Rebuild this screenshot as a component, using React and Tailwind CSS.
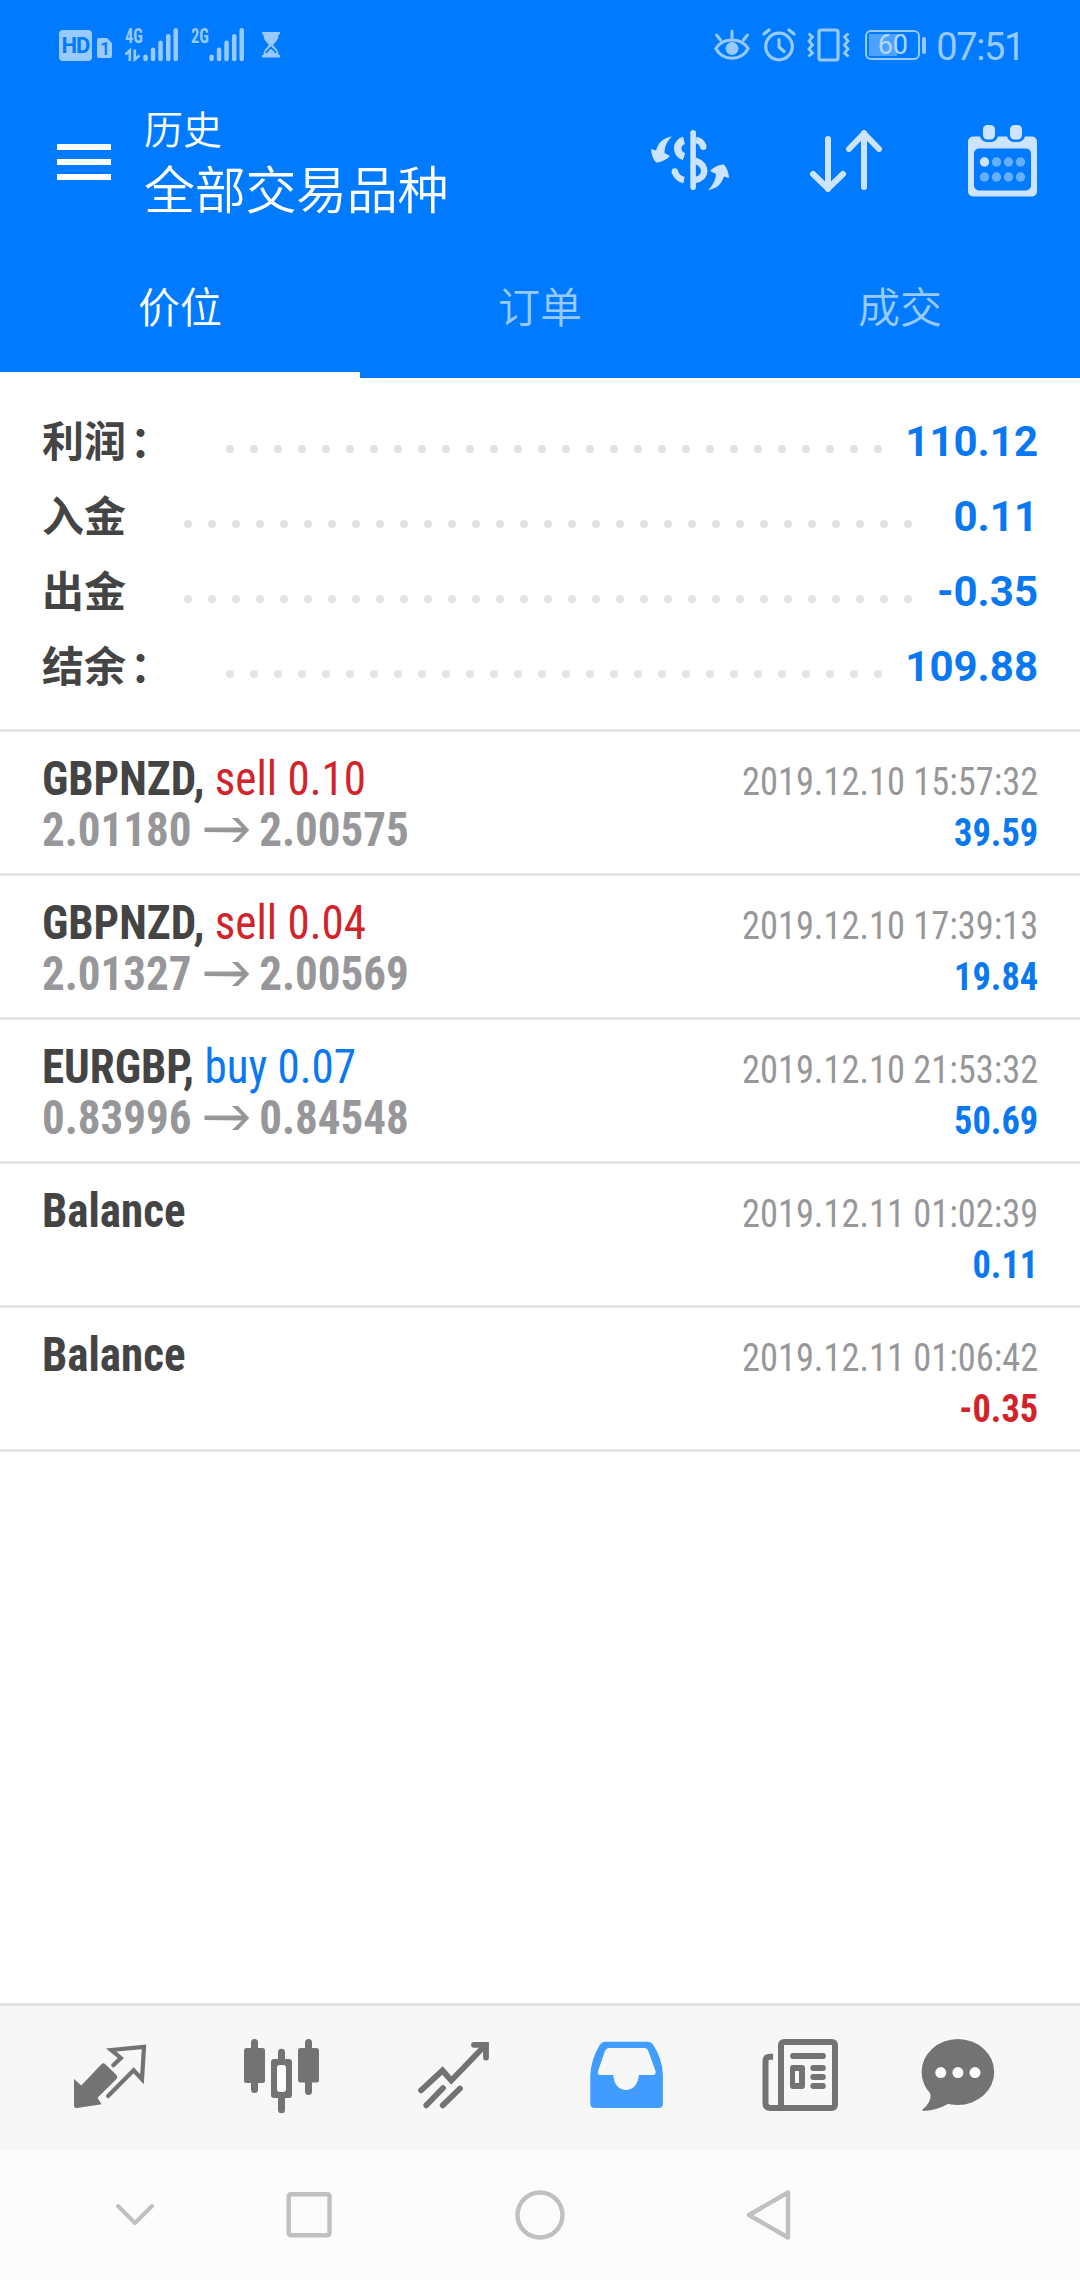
import React, { useState } from 'react';

// -----------------------------------------------------------------------------
// DATA
// -----------------------------------------------------------------------------
const TABS = ['价位', '订单', '成交'];

const SUMMARY = [
    { label: '利润', colon: true, value: '110.12', dots: 28, dotsClass: 'right-[156px]' },
    { label: '入金', value: '0.11', dots: 31, dotsClass: 'right-[126px]' },
    { label: '出金', value: '-0.35', dots: 31, dotsClass: 'right-[126px]' },
    { label: '结余', colon: true, value: '109.88', dots: 28, dotsClass: 'right-[156px]' },
];

const DEALS = [
    { id: 1, symbol: 'GBPNZD', side: 'sell', volume: '0.10', open: '2.01180', close: '2.00575', time: '2019.12.10 15:57:32', profit: '39.59' },
    { id: 2, symbol: 'GBPNZD', side: 'sell', volume: '0.04', open: '2.01327', close: '2.00569', time: '2019.12.10 17:39:13', profit: '19.84' },
    { id: 3, symbol: 'EURGBP', side: 'buy', volume: '0.07', open: '0.83996', close: '0.84548', time: '2019.12.10 21:53:32', profit: '50.69' },
    { id: 4, symbol: 'Balance', time: '2019.12.11 01:02:39', profit: '0.11' },
    { id: 5, symbol: 'Balance', time: '2019.12.11 01:06:42', profit: '-0.35' },
];

// -----------------------------------------------------------------------------
// STATUS BAR
// -----------------------------------------------------------------------------
const Signal = ({ label, data }) => (
    <svg className="overflow-visible" width="54" height="35" viewBox="0 0 54 35" fill="#99caff">
        <text x="1" y="15.6" fontSize="20" fontWeight="700" textLength="18" lengthAdjust="spacingAndGlyphs" className="font-['Roboto_Condensed',Roboto,sans-serif]">{label}</text>
        {data && (
            <g fill="none" stroke="#99caff" strokeWidth="2.6">
                <path d="M1.5 27.5 L5.8 23.5 V34" />
                <path d="M10.8 22.5 V32.5 L15.5 28.5" />
            </g>
        )}
        <rect x="19.3" y="27.6" width="4.5" height="6.6" rx="2.2" />
        <rect x="26.8" y="20.6" width="4.5" height="13.6" rx="2.2" />
        <rect x="34.3" y="13.6" width="4.5" height="20.6" rx="2.2" />
        <rect x="42" y="7" width="4.5" height="27.2" rx="2.2" />
        <rect x="49.5" y="1" width="4.5" height="33.2" rx="2.2" />
    </svg>
);

const StatusBar = () => (
    <div className="h-[90px] flex items-center justify-between pl-[59px] pr-[56px]">
        <div className="flex items-center">
            <div className="w-[33px] h-[31px] rounded-[4px] bg-[#99caff] text-[#007aff] text-[22px] leading-[31px] font-bold text-center tracking-[-1px] font-['Roboto',sans-serif]">HD</div>
            <svg className="ml-[5px] mt-[6px]" width="15" height="20" viewBox="0 0 15 20">
                <path d="M2 0 H10 L15 5 V18 a2 2 0 0 1 -2 2 H2 a2 2 0 0 1 -2 -2 V2 a2 2 0 0 1 2 -2Z" fill="#99caff" />
                <text x="3" y="16.5" fontSize="18" fontWeight="500" fill="#007aff" className="font-['Roboto',sans-serif]">1</text>
            </svg>
            <div className="ml-[12px] mb-[2px] flex gap-[12px]">
                <Signal label="4G" data />
                <Signal label="2G" />
            </div>
            <svg className="ml-[17px]" width="20" height="26" viewBox="0 0 20 26">
                <path d="M1 0 H19 V2.5 H17.5 C17.5 8 14.5 10 12 13 C14.5 16 17.5 18 17.5 23 H19 V25.5 H1 V23 H2.5 C2.5 18 5.5 16 8 13 C5.5 10 2.5 8 2.5 2.5 H1Z" fill="#99caff" />
                <path d="M5 21 C6 18.5 8 17.5 10 15.5 C12 17.5 14 18.5 15 21" fill="none" stroke="#007aff" strokeWidth="1.8" />
            </svg>
        </div>
        <div className="flex items-center">
            <svg width="36" height="32" viewBox="0 0 36 32" fill="none" stroke="#99caff" strokeWidth="3" strokeLinecap="round">
                <path d="M1.8 19.5 C9 8 27 8 34.2 19.5 C27 32.5 9 32.5 1.8 19.5Z" />
                <path d="M18 2 V8.5 M2.5 6 L6.5 11 M33.5 6 L29.5 11" />
                <circle cx="18" cy="19.5" r="6.5" fill="#99caff" stroke="none" />
            </svg>
            <svg className="ml-[12px]" width="34" height="34" viewBox="0 0 34 34" fill="none" stroke="#99caff" strokeWidth="3.2" strokeLinecap="round">
                <circle cx="17" cy="18.5" r="13.3" />
                <path d="M17 11.5 V19 L22 23.5 M2 6 L7 2 M32 6 L27 2" />
            </svg>
            <svg className="ml-[11px]" width="43" height="34" viewBox="0 0 43 34" fill="none" stroke="#99caff" strokeWidth="3.2">
                <rect x="12" y="2" width="19" height="30" rx="2" />
                <path d="M1.5 5.5 L5.5 9 L2 13 L5.5 17 L2 21 L5.5 25 L1.5 28.5" strokeWidth="2.8" />
                <path d="M41.5 5.5 L37.5 9 L41 13 L37.5 17 L41 21 L37.5 25 L41.5 28.5" strokeWidth="2.8" />
            </svg>
            <div className="ml-[15px] w-[55px] h-[30px] border-2 border-[#99caff] rounded-[6px] p-[2px] relative">
                <div className="h-full w-[28px] bg-[#4da2ff]" />
                <span className="absolute inset-0 text-center text-[27px] leading-[27px] text-[#b3d7ff] font-['Roboto',sans-serif]">60</span>
            </div>
            <div className="ml-[2px] w-[4px] h-[17px] rounded-[2px] bg-[#99caff]" />
            <span className="ml-[10px] mt-[3px] text-[38px] leading-none text-[#99caff] font-['Roboto',sans-serif] tracking-[-1.4px]">07:51</span>
        </div>
    </div>
);

// -----------------------------------------------------------------------------
// HEADER ICONS
// -----------------------------------------------------------------------------
const CurrencyIcon = () => (
    <svg width="80" height="64" viewBox="0 0 80 64" fill="#cce4ff">
        <path d="M22 8.5 C14 9.5 8.5 14 6 22.5 L1 21 C1.5 27 3 31 6 34.5 C11 34.5 16 32 20 28 L14.5 25 C14.5 19 17 13 22 8.5Z" />
        <path d="M58 62 C66 61 71.5 56.5 74 48.5 L79 50 C78.5 44 77 40 74 36.5 C69 36.5 64 39 60 43 L66 46 C65.5 52 63 57.5 58 62Z" />
        <rect x="40.3" y="2" width="5.6" height="60" rx="2.8" />
        <path d="M34 12.5 C25.6 14.5 25.6 26 34 28.8" fill="none" stroke="#cce4ff" strokeWidth="7.5" />
        <path d="M24.8 43.5 C26 48 29 51 34 52" fill="none" stroke="#cce4ff" strokeWidth="6.5" />
        <path d="M46 12 C49.5 12.5 52 15 53.5 18.5" fill="none" stroke="#cce4ff" strokeWidth="6.5" />
        <path d="M45 32.5 C57.5 37 57 50 45 52" fill="none" stroke="#cce4ff" strokeWidth="6.5" />
        <circle cx="53.3" cy="18.7" r="3.2" />
        <circle cx="24.8" cy="43.5" r="3.2" />
    </svg>
);

const SortIcon = () => (
    <svg width="74" height="64" viewBox="0 0 74 64" fill="none" stroke="#cce4ff" strokeWidth="6" strokeLinecap="round" strokeLinejoin="round">
        <path d="M19 11 V61 M4 46 L19 60.5 L34 46" />
        <path d="M55 59 V5 M40 21 L55 5.5 L70 21" />
    </svg>
);

const CalendarIcon = () => (
    <svg width="69" height="72" viewBox="0 0 69 72">
        <rect x="0" y="11.5" width="69" height="60" rx="5" fill="#cce4ff" />
        <rect x="6" y="23.5" width="57" height="42" rx="5" fill="#007aff" />
        <rect x="12" y="-3" width="18" height="20" rx="7" fill="#007aff" />
        <rect x="39" y="-3" width="18" height="20" rx="7" fill="#007aff" />
        <rect x="15" y="0" width="12" height="14.5" rx="4.5" fill="#cce4ff" />
        <rect x="42" y="0" width="12" height="14.5" rx="4.5" fill="#cce4ff" />
        <g fill="#66afff">
            <circle cx="16.5" cy="37" r="4.7" fill="#cce4ff" />
            <circle cx="28.5" cy="37" r="4.7" />
            <circle cx="40.5" cy="37" r="4.7" />
            <circle cx="52.5" cy="37" r="4.7" />
            <circle cx="16.5" cy="52" r="4.7" />
            <circle cx="28.5" cy="52" r="4.7" />
            <circle cx="40.5" cy="52" r="4.7" />
            <circle cx="52.5" cy="52" r="4.7" />
        </g>
    </svg>
);

// -----------------------------------------------------------------------------
// LIST
// -----------------------------------------------------------------------------
const SummaryRow = ({ label, colon, value, dots, dotsClass }) => (
    <div className="relative h-[75px] flex items-center justify-between">
        <span className="text-[42px] leading-none font-bold text-[#444444] pb-[5px]">
            {label}
            {colon && <span className="ml-[4px]">：</span>}
        </span>
        <div className={`absolute top-[41px] flex gap-4 ${dotsClass}`}>
            {Array.from({ length: dots }, (_, i) => (
                <span key={i} className="size-2 rounded-full bg-[#e3e3e3]" />
            ))}
        </div>
        <span className="text-[42px] leading-none font-bold text-[#0a78f0] font-['Roboto',sans-serif]">{value}</span>
    </div>
);

const DealRow = ({ deal }) => (
    <li className="h-36 border-b-3 border-[#e5e5e5] pt-[21px] px-[42px] flex justify-between font-['Roboto_Condensed',Roboto,sans-serif] font-stretch-condensed whitespace-nowrap">
        <div className="text-[48px] leading-[51px] origin-left scale-x-[0.938]">
            <p>
                <span className="font-bold text-[#444444]">{deal.symbol}{deal.side && ','}</span>
                {deal.side && (
                    <span className={deal.side === 'sell' ? 'text-[#d2232a]' : 'text-[#0a78f0]'}> {deal.side} {deal.volume}</span>
                )}
            </p>
            {deal.open && (
                <p className="flex items-center font-bold text-[#97979a]">
                    <span>{deal.open}</span>
                    <svg className="ml-[13px] mr-[11px]" width="48" height="26" viewBox="0 0 48 26" fill="#97979a">
                        <path d="M0 10.5 H40 L29.500 1 H36 L48 13 L36 25 H29.500 L40 15.5 L0 15Z" />
                    </svg>
                    <span>{deal.close}</span>
                </p>
            )}
        </div>
        <div className="text-[39px] leading-[51px] text-right pt-[4px] origin-right scale-x-[0.934]">
            <p className="text-[#97979a]">{deal.time}</p>
            <p className={`font-bold ${deal.profit.startsWith('-') ? 'text-[#d2232a]' : 'text-[#0a78f0]'}`}>{deal.profit}</p>
        </div>
    </li>
);

// -----------------------------------------------------------------------------
// BOTTOM BARS
// -----------------------------------------------------------------------------
const NavIcon = ({ children }) => (
    <button className="w-[172px] flex justify-center">
        <svg width="120" height="90" viewBox="0 0 120 90" fill="#737373">{children}</svg>
    </button>
);

const BottomNav = () => (
    <nav className="h-[147px] border-t-3 border-[#e2e2e2] bg-[#f7f7f7] pl-6 pt-6 flex items-start">
        <NavIcon>
            <path d="M24 49 L31.3 55.5 L51.7 34 Q53.3 32.3 55 34 L66.5 45 Q68 47 66.5 49 L47.5 67.7 L51.6 74.3 L27 78 Q24 78.3 24 75.5Z" />
            <path d="M63.3 35.3 L70.9 28 L61.2 20 L94 16.9 L92 49.3 L83.6 40.3 L58.1 66" fill="none" stroke="#737373" strokeWidth="4.2" strokeLinecap="round" />
        </NavIcon>
        <NavIcon>
            <rect x="22" y="18" width="21" height="35" rx="2.5" />
            <rect x="29" y="9" width="7" height="54" rx="3.5" />
            <rect x="49" y="29" width="21" height="39" rx="3" />
            <rect x="56" y="18.7" width="7" height="64.5" rx="3.5" />
            <rect x="55" y="35" width="9" height="27" rx="3" fill="#fff" />
            <rect x="76" y="18" width="21" height="34.5" rx="2.5" />
            <rect x="83" y="9" width="7" height="56" rx="3.5" />
        </NavIcon>
        <NavIcon>
            <g fill="none" stroke="#737373" strokeWidth="5.8" strokeLinecap="round">
                <path d="M27 60.3 L48.5 40.5 L57.3 50.5 L91.5 15" />
                <path d="M80 14.8 H92 V27.5" />
                <path d="M32.3 75.3 L49 58 M48.7 75.3 L66 58.5" />
            </g>
        </NavIcon>
        <NavIcon>
            <path d="M39 11.7 H82 Q85 11.7 87 14.5 Q96.5 29 96.9 45 V73.5 Q96.9 78 92.5 78 H29 Q24.3 78 24.3 73.5 V45 Q25 29 34 14.5 Q36 11.7 39 11.7Z" fill="#419cff" />
            <path d="M43.5 18 H78 Q81 18 82.3 21 L89.5 41 Q90.3 45 87 45 H72.8 C72 65 48 65 47.3 45 H34.5 Q31 45 32 41 L39 21 Q40.5 18 43.5 18Z" fill="#f7f7f7" />
        </NavIcon>
        <NavIcon>
            <path d="M35.1 26.7 H32 Q27.5 26.7 27.5 31 V73 Q27.5 78 32.5 78 H50" fill="none" stroke="#737373" strokeWidth="6" />
            <rect x="43" y="12" width="54" height="66" rx="3" fill="none" stroke="#737373" strokeWidth="6" />
            <rect x="52" y="23" width="36" height="6" rx="3" />
            <rect x="52" y="35" width="15" height="24" rx="3" />
            <rect x="57" y="41" width="4" height="12" fill="#f7f7f7" />
            <rect x="72.3" y="35" width="15.5" height="6" rx="3" />
            <rect x="72.3" y="44" width="15.5" height="6" rx="3" />
            <rect x="72.3" y="53" width="15.5" height="6" rx="3" />
        </NavIcon>
        <NavIcon>
            <ellipse cx="47.9" cy="42" rx="36.3" ry="33" />
            <path d="M17 57 Q23 65 19 72 Q17 76 12.5 79.5 Q12 81 14 81 Q27 80 38 74 L48 60Z" />
            <g fill="#fff">
                <circle cx="30.8" cy="42.6" r="5.5" />
                <circle cx="47.9" cy="42.6" r="5.5" />
                <circle cx="65" cy="42.6" r="5.5" />
            </g>
        </NavIcon>
    </nav>
);

const SystemNav = () => (
    <div className="h-[130px] bg-[#fcfcfc] flex items-center pl-[110px]">
        <svg width="50" height="50" viewBox="0 0 50 50" fill="none" stroke="#c0c0c0" strokeWidth="4" strokeLinecap="round" strokeLinejoin="round">
            <path d="M8 16 L25 33 L42 16" />
        </svg>
        <svg className="ml-[124px]" width="50" height="50" viewBox="0 0 50 50" fill="none" stroke="#c0c0c0" strokeWidth="4.4">
            <rect x="4.7" y="4.2" width="40.8" height="41" rx="2" />
        </svg>
        <svg className="ml-[181px]" width="50" height="50" viewBox="0 0 50 50" fill="none" stroke="#c0c0c0" strokeWidth="4.4">
            <circle cx="25" cy="25" r="22.5" />
        </svg>
        <svg className="ml-[179px]" width="50" height="50" viewBox="0 0 50 50" fill="none" stroke="#c0c0c0" strokeWidth="4.4" strokeLinejoin="round">
            <path d="M44 2.5 V47.5 L5 25Z" />
        </svg>
    </div>
);

// -----------------------------------------------------------------------------
// MAIN
// -----------------------------------------------------------------------------
export default function App() {
    const [activeTab, setActiveTab] = useState(0);

    return (
        <main lang="zh-CN" className="w-[1080px] h-[2280px] bg-white flex flex-col overflow-hidden font-['Noto_Sans_CJK_SC',sans-serif]">
            <header className="h-[378px] bg-[#007aff] text-white flex flex-col">
                <StatusBar />
                <div className="h-[150px] flex items-start justify-between pl-[57px] pr-[43px]">
                    <div className="flex">
                        <div className="mt-[54px] flex flex-col gap-[9px]">
                            <span className="w-[54px] h-[6px] bg-white" />
                            <span className="w-[54px] h-[6px] bg-white" />
                            <span className="w-[54px] h-[6px] bg-white" />
                        </div>
                        <div className="ml-[33px] mt-[12px] font-[350]">
                            <p className="text-[39px] leading-[50px]">历史</p>
                            <h1 className="text-[51px] leading-[70px] tracking-[-0.3px]">全部交易品种</h1>
                        </div>
                    </div>
                    <div className="flex items-start">
                        <div className="mt-[38px]"><CurrencyIcon /></div>
                        <div className="ml-[79px] mt-[38px]"><SortIcon /></div>
                        <div className="ml-[85px] mt-[35px]"><CalendarIcon /></div>
                    </div>
                </div>
                <div className="flex-1 grid grid-cols-3">
                    {TABS.map((tab, i) => (
                        <button
                            key={tab}
                            onClick={() => setActiveTab(i)}
                            className={`text-[42px] leading-[130px] pb-[2px] font-[350] border-b-6 ${activeTab === i ? 'text-white border-white' : 'text-[#99caff] border-transparent'}`}
                        >
                            {tab}
                        </button>
                    ))}
                </div>
            </header>

            <section className="h-[354px] border-b-3 border-[#e5e5e5] pt-[26px] px-[42px]">
                {SUMMARY.map(row => <SummaryRow key={row.label} {...row} />)}
            </section>

            <ul className="flex-1">
                {DEALS.map(deal => <DealRow key={deal.id} deal={deal} />)}
            </ul>

            <BottomNav />
            <SystemNav />
        </main>
    );
}
